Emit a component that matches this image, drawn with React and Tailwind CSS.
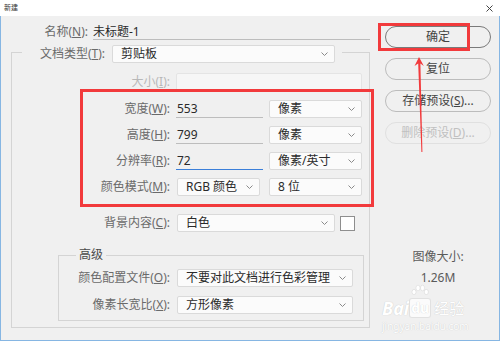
import React from "react";

const FONT = { fontFamily: '"Noto Sans", "Noto Sans CJK SC", sans-serif' };

function Chevron() {
  return (
    <svg width="7" height="4" viewBox="0 0 7 4" className="shrink-0">
      <path d="M0.5 0.5 L3.5 3.5 L6.5 0.5" fill="none" stroke="#8a8a8a" strokeWidth="1" />
    </svg>
  );
}

function Select({ className, text, disabled }) {
  return (
    <div
      className={`flex h-[18px] items-center justify-between rounded-[2px] border pl-[8px] pr-[6px] ${
        disabled ? "border-[#e4e4e4] bg-[#f6f6f6]" : "border-[#dadada] bg-[#fbfbfb]"
      } ${className}`}
    >
      <span className="text-[12px] leading-[16px] text-[#2a2a2a]">{text}</span>
      {!disabled && <Chevron />}
    </div>
  );
}

function Label({ className, children, disabled }) {
  return (
    <div
      className={`shrink-0 text-right text-[12px] leading-[18px] ${
        disabled ? "text-[#b8b8b8]" : "text-[#6a6a6a]"
      } ${className}`}
    >
      {children}
    </div>
  );
}

function Btn({ children, primary, disabled, className }) {
  return (
    <div
      className={`flex h-[22px] w-[106px] items-center justify-center rounded-full border text-[12px] ${
        primary
          ? "border-[#7a7a7a] text-[#444]"
          : disabled
          ? "border-[#e0e0e0] text-[#c0c0c0]"
          : "border-[#bcbcbc] text-[#444]"
      } ${className}`}
    >
      {children}
    </div>
  );
}

export default function App() {
  return (
    <div className="relative h-[342px] w-[500px] overflow-hidden bg-white" style={FONT}>
      {/* title bar */}
      <div className="flex h-[16px] items-center justify-between bg-white pl-[4px] pr-[7px]">
        <span className="text-[7px] leading-[8px] text-[#333]">新建</span>
        <svg width="7" height="7" viewBox="0 0 7 7">
          <path d="M0.5 0.5 L6.5 6.5 M6.5 0.5 L0.5 6.5" stroke="#444" strokeWidth="1" />
        </svg>
      </div>

      {/* body */}
      <div className="flex h-[325px] border-x border-b border-[#86b6e3] bg-[#f0f0f0]">
        {/* left column */}
        <div className="w-[369px] shrink-0 pt-[8px]">
          {/* name row */}
          <div className="flex h-[16px] items-center">
            <Label className="w-[87px] leading-[16px]">
              名称(<u>N</u>):
            </Label>
            <div className="ml-[5px] h-[16px] w-[277px] border-b border-[#bdbdbd] text-[12px] leading-[15px] text-[#2a2a2a]">
              未标题-1
            </div>
          </div>

          {/* outer group */}
          <div className="ml-[10px] mt-[12px] w-[359px] border border-[#d4d4d4] pb-[6px]">
            {/* legend row */}
            <div className="-mt-[8px] ml-[10px] flex w-fit items-center bg-[#f0f0f0] pr-[7px]">
              <Label className="w-[83px] text-[#4a4a4a]">
                文档类型(<u>T</u>):
              </Label>
              <Select className="ml-[7px] w-[223px]" text="剪贴板" />
            </div>

            {/* size */}
            <div className="mt-[10px] flex items-center">
              <Label className="w-[158px]" disabled>
                大小(<u>I</u>):
              </Label>
              <Select className="ml-[6px] w-[186px]" text="" disabled />
            </div>

            {/* width */}
            <div className="mt-[9px] flex items-center">
              <Label className="w-[158px]">
                宽度(<u>W</u>):
              </Label>
              <div className="ml-[6px] h-[18px] w-[87px] border-b border-[#bdbdbd] pl-[1px] text-[12px] leading-[17px] text-[#2a2a2a]">
                553
              </div>
              <Select className="ml-[6px] w-[93px]" text="像素" />
            </div>

            {/* height */}
            <div className="mt-[8px] flex items-center">
              <Label className="w-[158px]">
                高度(<u>H</u>):
              </Label>
              <div className="ml-[6px] h-[18px] w-[87px] border-b border-[#bdbdbd] pl-[1px] text-[12px] leading-[17px] text-[#2a2a2a]">
                799
              </div>
              <Select className="ml-[6px] w-[93px]" text="像素" />
            </div>

            {/* resolution */}
            <div className="mt-[8px] flex items-center">
              <Label className="w-[158px]">
                分辨率(<u>R</u>):
              </Label>
              <div className="ml-[6px] h-[18px] w-[87px] border-b border-[#3b7fd9] pl-[1px] text-[12px] leading-[17px] text-[#2a2a2a]">
                72
              </div>
              <Select className="ml-[6px] w-[93px]" text="像素/英寸" />
            </div>

            {/* color mode */}
            <div className="mt-[8px] flex items-center">
              <Label className="w-[158px]">
                颜色模式(<u>M</u>):
              </Label>
              <Select className="ml-[7px] w-[83px]" text="RGB 颜色" />
              <Select className="ml-[9px] w-[93px]" text="8 位" />
            </div>

            {/* background */}
            <div className="mt-[18px] flex items-center">
              <Label className="w-[158px]">
                背景内容(<u>C</u>):
              </Label>
              <Select className="ml-[7px] w-[158px]" text="白色" />
              <div className="ml-[5px] h-[15px] w-[15px] border border-[#8e8e8e] bg-white" />
            </div>

            {/* advanced group */}
            <div className="ml-[46px] mt-[23px] w-[306px] border border-[#d4d4d4] pb-[6px]">
              <div className="-mt-[9px] ml-[17px] h-[16px] w-fit bg-[#f0f0f0] px-[3px] text-[12px] leading-[16px] text-[#4a4a4a]">
                高级
              </div>
              <div className="mt-[6px] flex items-center">
                <Label className="w-[111px]">
                  颜色配置文件(<u>O</u>):
                </Label>
                <Select className="ml-[7px] w-[176px]" text="不要对此文档进行色彩管理" />
              </div>
              <div className="mt-[9px] flex items-center">
                <Label className="w-[111px]">
                  像素长宽比(<u>X</u>):
                </Label>
                <Select className="ml-[7px] w-[176px]" text="方形像素" />
              </div>
            </div>
          </div>
        </div>

        {/* right column */}
        <div className="flex flex-col pl-[15px] pt-[10px]">
          <Btn primary>确定</Btn>
          <Btn className="mt-[10px]">复位</Btn>
          <Btn className="mt-[10px]">
            存储预设(<u>S</u>)...
          </Btn>
          <Btn className="mt-[10px]" disabled>
            删除预设(<u>D</u>)...
          </Btn>
          <div className="mt-[105px] w-[106px] text-center text-[12px] leading-[16px] text-[#5a5a5a]">
            图像大小:
          </div>
          <div className="mt-[5px] w-[106px] text-center text-[12px] leading-[16px] text-[#5a5a5a]">
            1.26M
          </div>
        </div>
      </div>

      {/* watermark */}
      <div
        className="pointer-events-none absolute left-[382px] top-[282px] flex flex-col text-white"
        style={{ textShadow: "0 0 1px rgba(0,0,0,0.22)" }}
      >
        <div className="flex h-[36px] items-end">
          <span className="text-[18px] font-bold italic leading-[20px]">Bai</span>
          <div className="flex flex-col items-center">
            <svg width="18" height="14" viewBox="0 0 18 14">
              <g fill="#fff" stroke="rgba(0,0,0,0.12)" strokeWidth="0.6">
                <ellipse cx="3" cy="8" rx="2" ry="2.6" />
                <ellipse cx="7" cy="4" rx="2" ry="2.8" />
                <ellipse cx="11.5" cy="4" rx="2" ry="2.8" />
                <ellipse cx="15.3" cy="8" rx="2" ry="2.6" />
              </g>
            </svg>
            <span className="rounded-[3px] border border-[rgba(0,0,0,0.1)] bg-white/70 px-[1px] text-[14px] font-bold leading-[18px]">
              du
            </span>
          </div>
          <span className="ml-[3px] text-[15px] leading-[20px]">经验</span>
        </div>
        <div className="mt-[2px] text-[10px] leading-[12px]">jingyan.baidu.com</div>
      </div>

      {/* red annotations */}
      <div className="pointer-events-none absolute left-[378px] top-[23px] h-[28px] w-[92px] border-[3px] border-[#f23a3c]" />
      <div className="pointer-events-none absolute left-[80px] top-[89px] h-[118px] w-[294px] border-[3px] border-[#f23a3c]" />
      <svg className="pointer-events-none absolute left-0 top-0" width="500" height="342">
        <polygon
          points="419,57 414.5,66 418.2,63.5 421.4,152 422.4,152 420.4,63.5 423.8,66"
          fill="#f23a3c"
        />
      </svg>
    </div>
  );
}
